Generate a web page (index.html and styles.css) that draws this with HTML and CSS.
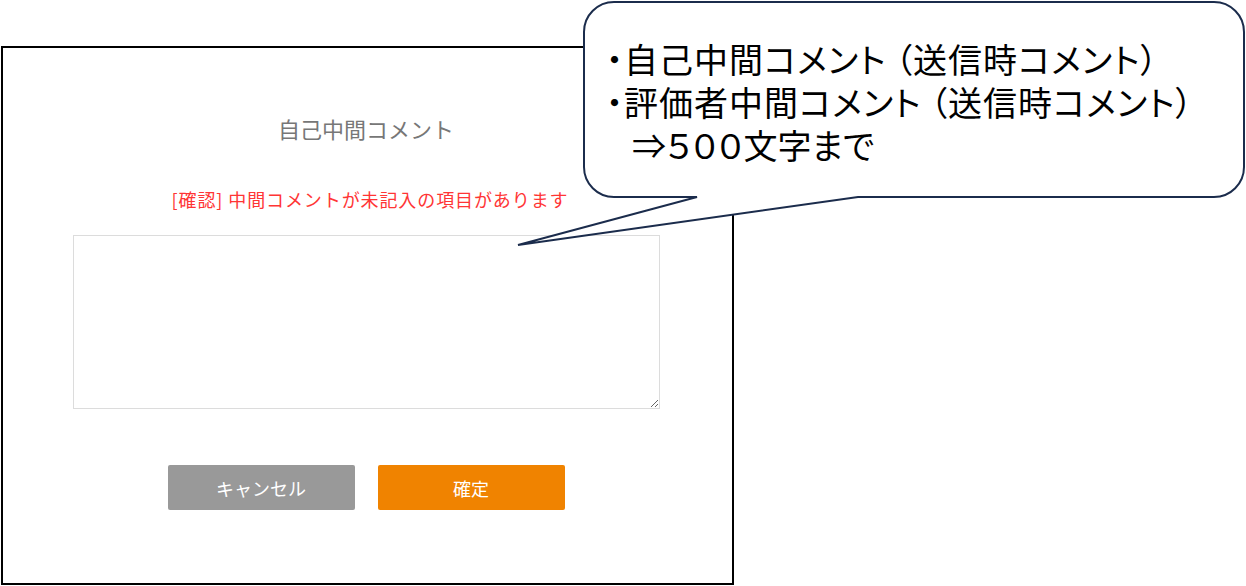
FILE: index.html
```html
<!DOCTYPE html>
<html lang="ja">
<head>
  <meta charset="UTF-8">
  <title>自己中間コメント</title>
  <link rel="stylesheet" href="styles.css">
</head>
<body>
<div class="dialog">
  <h2 class="dialog-title">自己中間コメント</h2>
  <p class="dialog-alert">[確認] 中間コメントが未記入の項目があります</p>
  <textarea class="dialog-text"></textarea>
  <div class="dialog-buttons">
    <button class="btn btn-cancel">キャンセル</button>
    <button class="btn btn-ok">確定</button>
  </div>
</div>

<!-- 吹き出し（注釈） -->
<div class="callout">
  <svg class="callout-shape" width="746" height="260" viewBox="0 0 746 260">
    <path d="M114 2 H714 A30 30 0 0 1 744 32 V167 A30 30 0 0 1 714 197 H358 L18 245 L197 197 H114 A30 30 0 0 1 84 167 V32 A30 30 0 0 1 114 2 Z"
          fill="#fff" stroke="#1b2c4c" stroke-width="2" stroke-linejoin="miter"/>
  </svg>
  <div class="callout-text">
    <p>・自己中間コメント （送信時コメント）</p>
    <p>・評価者中間コメント （送信時コメント）</p>
    <p class="indent">⇒５００文字まで</p>
  </div>
</div>
</body>
</html>
```

FILE: styles.css
```css
body {
  margin: 0;
  font-family: "Noto Sans CJK JP", "Noto Sans", sans-serif;
  background: #fff;
  position: relative;
  width: 1246px;
  height: 586px;
  overflow: hidden;
}

.dialog {
  width: 726px;
  height: 535px;
  margin: 46px 0 0 1px;
  padding-right: 3px;
  border: 2px solid #000;
  display: flex;
  flex-direction: column;
  align-items: center;
}

.dialog-title {
  margin: 65px 0 0;
  font-size: 22px;
  line-height: 30px;
  font-weight: normal;
  color: #777;
}

.dialog-alert {
  margin: 43px 0 0 8px;
  font-size: 18px;
  line-height: 26px;
  color: #ff3535;
  letter-spacing: 0.9px;
}

.dialog-text {
  margin-top: 23px;
  width: 587px;
  height: 174px;
  box-sizing: border-box;
  border: 1px solid #dcdcdc;
  border-radius: 0;
  outline: none;
  resize: both;
  font-family: inherit;
}

.dialog-buttons {
  margin-top: 56px;
  display: flex;
  gap: 23px;
}

.btn {
  width: 187px;
  height: 45px;
  border: none;
  border-radius: 2px;
  color: #fff;
  font-family: inherit;
  font-size: 18px;
  cursor: pointer;
}

.btn-cancel {
  background: #999;
}

.btn-ok {
  background: #f08300;
}

/* 吹き出し */
.callout {
  position: absolute;
  left: 500px;
  top: 0;
  width: 746px;
  height: 260px;
}

.callout-shape {
  display: block;
}

.callout-text {
  position: absolute;
  left: 106px;
  top: 37px;
  font-size: 34px;
  line-height: 43px;
  letter-spacing: 1px;
  color: #000;
  white-space: nowrap;
  font-feature-settings: "palt";
}

.callout-text p {
  margin: 0;
  height: 43px;
}

.callout-text .indent {
  padding-left: 26px;
  letter-spacing: 0;
}
```
